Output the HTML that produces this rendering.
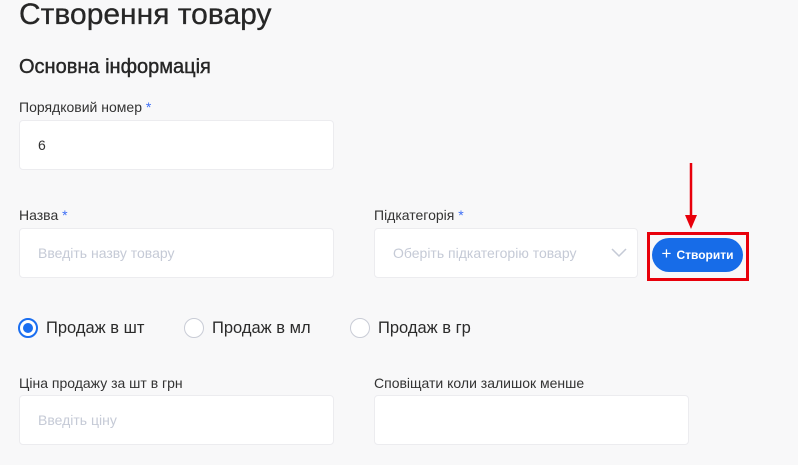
<!DOCTYPE html>
<html><head><meta charset="utf-8"><style>
*{box-sizing:border-box;margin:0;padding:0}
body{width:798px;height:465px;background:#f8f8f9;font-family:"Liberation Sans",sans-serif;color:#2b2b2b;position:relative;overflow:hidden}
.a{position:absolute;white-space:nowrap}
h1{position:absolute;left:19px;top:-2px;font-size:30px;font-weight:400;color:#262626;-webkit-text-stroke:0.3px #262626}
h2{position:absolute;left:19px;top:56px;font-size:20px;font-weight:400;color:#262626;-webkit-text-stroke:0.4px #262626}
.l{font-size:14px;color:#333}
.l b{color:#3d6ef5;font-weight:400}
.in{position:absolute;background:#fff;border:1px solid #ececef;border-radius:4px;font-size:14px;color:#c5cad6;padding-left:18px;display:flex;align-items:center}
.r{position:absolute;width:20px;height:20px;border-radius:50%;border:1px solid #c9ccd6;background:#fff}
.r.on{border:2px solid #1a6ef0}
.r.on::after{content:"";position:absolute;left:3px;top:3px;width:10px;height:10px;border-radius:50%;background:#1a6ef0}
.rl{font-size:16.5px;color:#2b2b2b}
</style></head><body>
<h1>Створення товару</h1>
<h2>Основна інформація</h2>
<div class="a l" style="left:19px;top:99px">Порядковий номер <b>*</b></div>
<div class="in" style="left:19px;top:120px;width:315px;height:50px;color:#333">6</div>
<div class="a l" style="left:19px;top:207px">Назва <b>*</b></div>
<div class="in" style="left:19px;top:228px;width:315px;height:50px">Введіть назву товару</div>
<div class="a l" style="left:374px;top:207px">Підкатегорія <b>*</b></div>
<div class="in" style="left:374px;top:228px;width:264px;height:50px">Оберіть підкатегорію товару
<svg style="position:absolute;right:10px;top:19px" width="16" height="10" viewBox="0 0 16 10"><path d="M1 1l7 7 7-7" fill="none" stroke="#c5cad6" stroke-width="1.5"/></svg></div>
<svg class="a" style="left:684px;top:163px" width="14" height="68" viewBox="0 0 14 68"><path d="M7 0V58" stroke="#e8000b" stroke-width="2.5"/><path d="M1 52L7 66 13 52Z" fill="#e8000b"/></svg>
<div class="a" style="left:647px;top:232px;width:102px;height:49px;border:3px solid #e8000b"></div>
<div class="a" style="left:652px;top:238px;width:91px;height:34px;border-radius:17px;background:#176ce8;color:#fff;font-size:12px;font-weight:700;display:flex;align-items:center;justify-content:center"><span style="font-size:17px;font-weight:400;margin-right:5px;margin-top:-2px">+</span>Створити</div>
<div class="r on" style="left:18px;top:318px"></div><div class="a rl" style="left:46px;top:319px">Продаж в шт</div>
<div class="r" style="left:184px;top:318px"></div><div class="a rl" style="left:212px;top:319px">Продаж в мл</div>
<div class="r" style="left:350px;top:318px"></div><div class="a rl" style="left:378px;top:319px">Продаж в гр</div>
<div class="a l" style="left:19px;top:375px">Ціна продажу за шт в грн</div>
<div class="in" style="left:19px;top:395px;width:315px;height:50px">Введіть ціну</div>
<div class="a l" style="left:374px;top:375px">Сповіщати коли залишок менше</div>
<div class="in" style="left:374px;top:395px;width:315px;height:50px"></div>
</body></html>
